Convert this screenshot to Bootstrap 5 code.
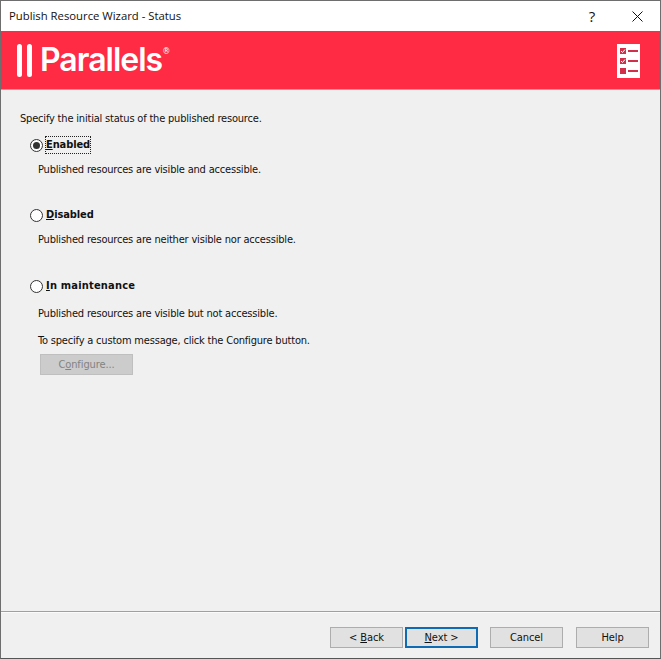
<!DOCTYPE html>
<html lang="en">
<head>
  <meta charset="UTF-8">
  <title>Publish Resource Wizard - Status</title>
  <link href="https://cdn.jsdelivr.net/npm/bootstrap@5.3.3/dist/css/bootstrap.min.css" rel="stylesheet">
  <style>
    html, body { height: 100%; }
    body {
      background: #f0f0f0;
      font-family: "DejaVu Sans Condensed", "Liberation Sans", sans-serif;
      font-size: 11px;
      letter-spacing: -0.19px;
      line-height: 16px;
      color: #111;
      overflow: hidden;
    }
    .wiz-window {
      height: 659px;
      border: 1px solid #6e6e6e;
      border-bottom-color: #555;
    }
    .wiz-title {
      height: 30px;
      background: #fff;
      padding-left: 8px;
      font-family: "Open Sans", "Noto Sans", sans-serif;
      font-size: 11.3px;
      letter-spacing: 0;
    }
    .wiz-help { width: 16px; margin-right: 32px; font-size: 15px; text-align: center; }
    .wiz-close { margin-right: 17px; }
    .wiz-banner {
      height: 59px;
      background: #ff2a44;
      border-bottom: 1px solid #a9a9a9;
      padding: 0 20px 0 16px;
      color: #fff;
    }
    .logo-bar { width: 5px; height: 33px; background: #fff; border-radius: 3px; margin-right: 5px; }
    .logo-text {
      font-family: Inter, "Noto Sans", sans-serif;
      font-size: 32px;
      font-weight: 600;
      line-height: 34px;
      letter-spacing: -1px;
      margin-left: 3px;
    }
    .logo-reg { font-size: 9px; line-height: 10px; align-self: flex-start; margin-top: 3px; letter-spacing: 0; }
    .wiz-logo-icon { margin-top: 2px; }
    .wiz-main { padding: 21px 0 0 19px; }
    .opt-block { padding-left: 10px; }
    .opt-radio {
      width: 13px; height: 13px;
      border: 1px solid #333;
      border-radius: 50%;
      background: #fff;
      margin-right: 3px;
      flex: none;
    }
    .opt-radio.on::after {
      content: "";
      display: block;
      width: 7px; height: 7px;
      margin: 2px;
      background: #333;
      border-radius: 50%;
    }
    .opt-label { font-weight: 700; letter-spacing: -0.1px; }
    .opt-label-wide { letter-spacing: 0.2px; }
    .opt-focus { outline: 1px dotted #222; outline-offset: 0; }
    .opt-desc { margin: 9px 0 0 8px; }
    .opt-desc-wide { margin-top: 12px; }
    .opt-gap-a { margin-top: 10px; }
    .opt-gap-b { margin-top: 29px; }
    .opt-gap-c { margin-top: 30px; }
    .opt-note { margin: 11px 0 0 8px; }
    .wiz-btn {
      width: 73px;
      height: 21px;
      padding: 0;
      border: 1px solid #adadad;
      border-radius: 0;
      background: #e1e1e1;
      color: #111;
      font-size: 11px;
      letter-spacing: -0.1px;
      line-height: 18px;
    }
    .wiz-btn:disabled { background: #ccc; border-color: #bfbfbf; color: #838383; opacity: 1; }
    .wiz-btn.is-default { border: 2px solid #0f6cb4; }
    .wiz-configure { width: 93px; margin: 5px 0 0 10px; display: block; }
    .wiz-footer {
      height: 47px;
      border-top: 1px solid #a0a0a0;
      box-shadow: inset 0 1px 0 #fbfbfb;
      padding: 15px 11px 0 0;
    }
    .foot-next { margin-left: 2px; }
    .foot-cancel { margin-left: 12px; }
    .foot-help { margin-left: 13px; }
  </style>
</head>
<body>
  <div class="wiz-window d-flex flex-column">
    <div class="wiz-title d-flex align-items-center justify-content-between flex-shrink-0">
      <span>Publish Resource Wizard - Status</span>
      <span class="d-flex align-items-center">
        <span class="wiz-help">?</span>
        <svg class="wiz-close" width="11" height="11" viewBox="0 0 11 11"><path d="M.5.5l10 10M10.5.5l-10 10" stroke="#111" fill="none"/></svg>
      </span>
    </div>

    <div class="wiz-banner d-flex align-items-center justify-content-between flex-shrink-0">
      <div class="d-flex align-items-center">
        <span class="logo-bar"></span>
        <span class="logo-bar"></span>
        <span class="logo-text">Parallels</span>
        <span class="logo-reg">®</span>
      </div>
      <svg class="wiz-logo-icon" width="23" height="34" viewBox="0 0 23 34">
        <rect width="23" height="34" fill="#fff"/>
        <g fill="#d0304a">
          <rect x="3" y="4" width="6" height="6"/><rect x="11" y="6" width="10" height="2"/>
          <rect x="3" y="14" width="6" height="6"/><rect x="11" y="16" width="10" height="2"/>
          <rect x="3" y="24" width="6" height="6"/><rect x="11" y="26" width="10" height="2"/>
        </g>
        <path d="M4 7l1.500 1.500L8 5.500M4 17l1.500 1.500L8 15.500" stroke="#fff" fill="none"/>
      </svg>
    </div>

    <div class="wiz-main flex-grow-1">
      <div>Specify the initial status of the published resource.</div>
      <div class="opt-block">
        <div class="d-flex align-items-center opt-gap-a">
          <span class="opt-radio on"></span>
          <span class="opt-label opt-focus"><u>E</u>nabled</span>
        </div>
        <div class="opt-desc">Published resources are visible and accessible.</div>

        <div class="d-flex align-items-center opt-gap-b">
          <span class="opt-radio"></span>
          <span class="opt-label"><u>D</u>isabled</span>
        </div>
        <div class="opt-desc">Published resources are neither visible nor accessible.</div>

        <div class="d-flex align-items-center opt-gap-c">
          <span class="opt-radio"></span>
          <span class="opt-label opt-label-wide"><u>I</u>n maintenance</span>
        </div>
        <div class="opt-desc opt-desc-wide">Published resources are visible but not accessible.</div>
        <div class="opt-note">To specify a custom message, click the Configure button.</div>
        <button class="btn wiz-btn wiz-configure" disabled>C<u>o</u>nfigure...</button>
      </div>
    </div>

    <div class="wiz-footer d-flex justify-content-end flex-shrink-0">
      <button class="btn wiz-btn">&lt; <u>B</u>ack</button>
      <button class="btn wiz-btn is-default foot-next"><u>N</u>ext &gt;</button>
      <button class="btn wiz-btn foot-cancel">Cancel</button>
      <button class="btn wiz-btn foot-help">Help</button>
    </div>
  </div>
  <script src="https://cdn.jsdelivr.net/npm/bootstrap@5.3.3/dist/js/bootstrap.bundle.min.js"></script>
</body>
</html>
